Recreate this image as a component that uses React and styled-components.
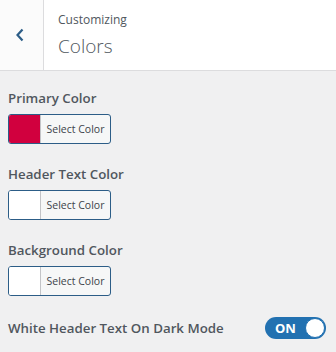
import React from 'react'
import styled, { createGlobalStyle } from 'styled-components'

const Global = createGlobalStyle`
  html, body { margin: 0; padding: 0; background: #f0f0f1; }
  body { font-family: "Open Sans", "Noto Sans", sans-serif; }
`

const Panel = styled.div`
  width: 336px;
  height: 352px;
  background: #f0f0f1;
  overflow: hidden;
`

const Header = styled.div`
  display: flex;
  height: 70px;
  background: #fff;
  border-bottom: 1px solid #dcdcde;
`

const BackButton = styled.button`
  width: 44px;
  border: 0;
  border-right: 1px solid #dcdcde;
  background: #fbfbfb;
  display: flex;
  align-items: center;
  justify-content: center;
  padding: 0 4px 0 0;
  color: #2c5d87;
`

const Titles = styled.div`
  display: flex;
  flex-direction: column;
  padding: 11px 0 0 14px;
`

const Small = styled.span`
  font-size: 12px;
  color: #50575e;
  line-height: 18px;
`

const Big = styled.span`
  font-size: 19px;
  font-weight: 300;
  color: #50575e;
  line-height: 26px;
  margin-top: 4px;
`

const Body = styled.div`
  padding: 18px 8px 0;
  display: flex;
  flex-direction: column;
  gap: 21px;
`

const Section = styled.div`
  display: flex;
  flex-direction: column;
  gap: 7px;
`

const Label = styled.span`
  font-size: 13.3px;
  font-weight: 600;
  color: #50575e;
  line-height: 18px;
`

const ColorButton = styled.div`
  display: flex;
  width: 101px;
  height: 28px;
  border: 1px solid #2c5d87;
  border-radius: 3px;
  overflow: hidden;
  background: #f6f7f7;
`

const Swatch = styled.div`
  width: 31px;
  background: ${p => p.$color};
  border-right: 1px solid #c3c4c7;
`

const SelectText = styled.span`
  flex: 1;
  display: flex;
  align-items: center;
  justify-content: center;
  font-size: 10.5px;
  color: #3c434a;
`

const ToggleRow = styled.div`
  display: flex;
  align-items: center;
  justify-content: space-between;
  padding-right: 2px;
`

const Toggle = styled.div`
  width: 61px;
  height: 22px;
  border-radius: 11px;
  background: #2271b1;
  display: flex;
  align-items: center;
  justify-content: space-between;
  padding-left: 10px;
  box-sizing: border-box;
  color: #fff;
  font-size: 13px;
  font-weight: 700;
`

const Knob = styled.span`
  width: 20px;
  height: 20px;
  border-radius: 50%;
  background: #fff;
  border: 1px solid #2271b1;
  box-sizing: border-box;
  margin-right: 1px;
`

const colors = [
  { label: 'Primary Color', color: '#d1003e' },
  { label: 'Header Text Color', color: '#ffffff' },
  { label: 'Background Color', color: '#ffffff' },
]

export default function App() {
  return (
    <Panel>
      <Global />
      <Header>
        <BackButton>
          <svg width="10" height="14" viewBox="0 0 10 14">
            <path d="M7.5 1.5 2.5 7l5 5.5" fill="none" stroke="currentColor" strokeWidth="2.2" />
          </svg>
        </BackButton>
        <Titles>
          <Small>Customizing</Small>
          <Big>Colors</Big>
        </Titles>
      </Header>
      <Body>
        {colors.map(c => (
          <Section key={c.label}>
            <Label>{c.label}</Label>
            <ColorButton>
              <Swatch $color={c.color} />
              <SelectText>Select Color</SelectText>
            </ColorButton>
          </Section>
        ))}
        <ToggleRow>
          <Label>White Header Text On Dark Mode</Label>
          <Toggle>
            ON
            <Knob />
          </Toggle>
        </ToggleRow>
      </Body>
    </Panel>
  )
}
